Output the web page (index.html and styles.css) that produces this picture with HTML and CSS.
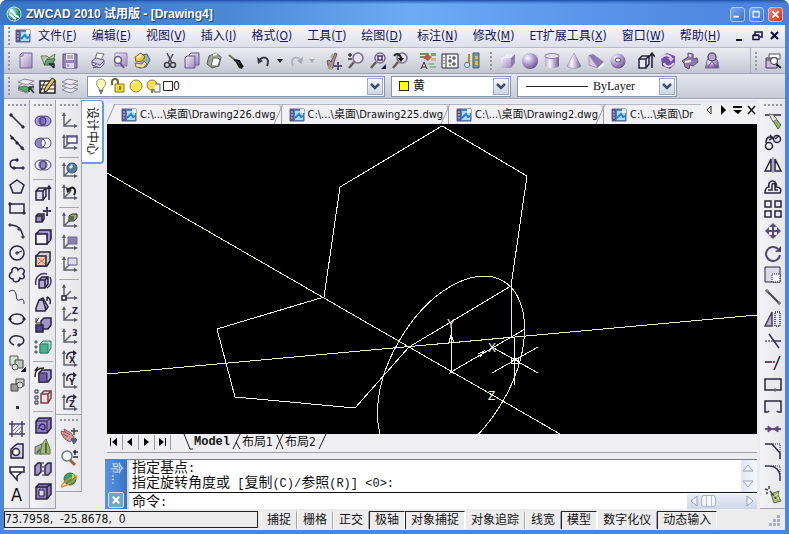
FILE: index.html
```html
<!DOCTYPE html>
<html lang="zh-CN">
<head>
<meta charset="utf-8">
<meta name="viewport" content="width=device-width, initial-scale=1">
<title>ZWCAD 2010 试用版 - [Drawing4]</title>
<link rel="stylesheet" href="styles.css">
</head>
<body>
<svg class="defs" width="0" height="0" aria-hidden="true">
  <defs>
    <linearGradient id="lilac" x1="0" y1="0" x2="1" y2="1"><stop offset="0" stop-color="#f6f2fb"/><stop offset="1" stop-color="#9b86bd"/></linearGradient>
    <linearGradient id="metal" x1="0" y1="0" x2="1" y2="0"><stop offset="0" stop-color="#b9aacd"/><stop offset=".35" stop-color="#f7f4fb"/><stop offset="1" stop-color="#6f5a92"/></linearGradient>
    <radialGradient id="ball" cx=".35" cy=".3" r=".75"><stop offset="0" stop-color="#fbf9ff"/><stop offset=".5" stop-color="#b3a0d3"/><stop offset="1" stop-color="#65508a"/></radialGradient>
    <radialGradient id="app" cx=".35" cy=".3" r=".8"><stop offset="0" stop-color="#c8f4e0"/><stop offset=".5" stop-color="#3a9c8a"/><stop offset="1" stop-color="#0c4a5c"/></radialGradient>
  </defs>
  <symbol id="doc" viewBox="0 0 16 16"><path d="M1 2h14v12H1z" fill="#4a86c4" stroke="#5a6488"/><path d="M1 2h4v12H1z" fill="#5b5688"/><path d="M6 4h8v9H6z" fill="#a8dcf8"/><path d="M11 2v4h4V2z" fill="#e6f3fc"/><path d="M6 11l4-4 2 3 2-1" stroke="#2f7fc0" stroke-width="2" fill="none"/><path d="M2 5h2M2 8h2M2 11h2" stroke="#c8c8ea"/></symbol>
  <symbol id="ucs" viewBox="0 0 18 18"><path d="M4 2v12h12M4 14l7-7" fill="none" stroke="#63636f" stroke-width="1.5"/><path d="M4 0L2 4h4zM18 14l-4-2v4z" fill="#56566a" stroke="none"/></symbol>
  <symbol id="turn" viewBox="0 0 18 18"><path d="M4 2v13h12" fill="none" stroke="#63636f" stroke-width="1.5"/><path d="M4 0L2 4h4zM18 15l-4-2v4z" fill="#56566a" stroke="none"/><path d="M7 9c-1-6 4-8 8-6" fill="none" stroke="#29243c" stroke-width="1.5"/><path d="M13 0l4 3-4 3z" fill="#29243c" stroke="none"/></symbol>
  <symbol id="lens" viewBox="0 0 18 18"><circle cx="11" cy="6" r="5" fill="#e9e4f2" stroke="#776b8c" stroke-width="1.5"/><path d="M7 10l-5 6" stroke="#6a5d56" stroke-width="2.5"/></symbol>
  <symbol id="layers" viewBox="0 0 18 18"><g fill="#eeeaf4" stroke="#8b869c"><path d="M1 13l6-3 10 2-7 4z"/><path d="M1 9l6-3 10 2-7 4z"/><path d="M1 5l6-3 10 2-7 4z"/></g></symbol>
  <symbol id="chev" viewBox="0 0 14 15"><path d="M3 5l4 4 4-4" fill="none" stroke="#40506c" stroke-width="2.5"/></symbol>
</svg>

<div class="window">
  <header class="titlebar">
    <svg class="logo" viewBox="0 0 16 16"><circle cx="8" cy="8" r="7" fill="url(#app)" stroke="#cfe6ee"/><path d="M4 4c5 0 3 7 9 7M3 8c3 1 3 4 7 5" fill="none" stroke="#e6fff4" stroke-width="2"/></svg>
    <h1>ZWCAD 2010 试用版 - [Drawing4]</h1>
    <div class="winbtns">
      <button aria-label="最小化"><svg viewBox="0 0 15 15"><path d="M3 10h6" stroke="#fff" stroke-width="2"/></svg></button>
      <button aria-label="最大化"><svg viewBox="0 0 15 15"><path d="M3.500 4.500h7v6h-7zM3 4h8" fill="none" stroke="#dcebff" stroke-width="1.500"/></svg></button>
      <button class="close" aria-label="关闭"><svg viewBox="0 0 15 15"><path d="M4 4l7 7M11 4l-7 7" stroke="#fff" stroke-width="2"/></svg></button>
    </div>
  </header>

  <nav class="menubar">
    <i class="grip"></i>
    <svg class="docicon"><use href="#doc"/></svg>
    <div class="menus">
      <button>文件(<u>F</u>)</button><button>编辑(<u>E</u>)</button><button>视图(<u>V</u>)</button><button>插入(<u>I</u>)</button><button>格式(<u>O</u>)</button><button>工具(<u>T</u>)</button><button>绘图(<u>D</u>)</button><button>标注(<u>N</u>)</button><button>修改(<u>M</u>)</button><button>ET扩展工具(<u>X</u>)</button><button>窗口(<u>W</u>)</button><button>帮助(<u>H</u>)</button>
    </div>
    <div class="mdi">
      <button aria-label="最小化文档"><svg viewBox="0 0 12 12"><path d="M3 10h6" stroke="#101040" stroke-width="2"/></svg></button>
      <button aria-label="还原文档"><svg viewBox="0 0 12 12"><path d="M4 5V2h7v5H9M2 5.500h6v4H2zM2 5h6M4 2h7" fill="none" stroke="#101040" stroke-width="1.500"/></svg></button>
      <button aria-label="关闭文档"><svg viewBox="0 0 12 12"><path d="M2 2l7 7M9 2L2 9" stroke="#101040" stroke-width="2.200"/></svg></button>
    </div>
  </nav>

  <div class="toolbar">
    <i class="grip"></i>
    <div class="set">
      <button aria-label="新建"><svg viewBox="0 0 18 18"><path d="M3 3l2-2h10v15H3z" fill="url(#lilac)" stroke="#75658f"/><path d="M3 4h3V1" fill="#fff" stroke="#75658f"/></svg></button>
      <button aria-label="打开"><svg viewBox="0 0 18 18"><path d="M2 4h6l2 2 6-4-2 10H5z" fill="#b7cdb0" stroke="#5f7c5c"/><path d="M5 13l3-6h8l-3 6z" fill="#6fa06a" stroke="#3c643c"/><path d="M10 12h5v4M15 16l-5-5" stroke="#223" stroke-width="1.500" fill="none"/></svg></button>
      <button aria-label="保存"><svg viewBox="0 0 18 18"><path d="M2 2h14v14H2z" fill="#9383b8" stroke="#5c4e7c"/><path d="M5 2h8v6H5z" fill="#f4f0fa"/><path d="M5 11h8v5H5z" fill="#ded6ea"/><path d="M6 4h6M6 6h6M7 12v3" stroke="#7a6b99"/></svg></button>
    </div>
    <div class="set">
      <button aria-label="打印"><svg viewBox="0 0 18 18"><path d="M6 7l2-6 7 1-3 6z" fill="#fff" stroke="#71688a"/><path d="M3 9l4-3 8 2v4l-4 4-8-3z" fill="#cfc8dc" stroke="#6a6280"/><path d="M3 10l8 3 4-4M7 12l-3 4 5-1" fill="none" stroke="#6a6280"/></svg></button>
      <button aria-label="打印预览"><svg viewBox="0 0 18 18"><path d="M4 1h12v13H4z" fill="url(#lilac)" stroke="#9184a8"/><circle cx="7" cy="8" r="3.500" fill="#f4f2f8" stroke="#675c7c" stroke-width="1.500"/><path d="M9 11l4 5" stroke="#675c7c" stroke-width="2"/></svg></button>
      <button aria-label="发布"><svg viewBox="0 0 18 18"><path d="M9 3l5-1 3 6-4 7-7 1" fill="#93b1c0" stroke="#476070"/><path d="M2 5l6-4 4 4-3 4-6 1z" fill="#f0c93c" stroke="#876420"/><path d="M4 6l4-3" stroke="#fff7c0" stroke-width="2"/><path d="M2 11l7 1 2-3 3 3-4 4-7-1z" fill="#e8dca0" stroke="#7c7040"/></svg></button>
    </div>
    <div class="set">
      <button aria-label="剪切"><svg viewBox="0 0 18 18" fill="none" stroke="#49434d" stroke-width="1.500"><path d="M6 1l5 10M12 2L7 11"/><circle cx="6" cy="13" r="2.500"/><circle cx="12" cy="13" r="2.500"/></svg></button>
      <button aria-label="复制"><svg viewBox="0 0 18 18" fill="url(#lilac)" stroke="#6a5b88"><path d="M6 3l2-2h8v12H6z"/><path d="M2 6l2-2h8v12H2z"/></svg></button>
      <button aria-label="粘贴"><svg viewBox="0 0 18 18"><path d="M4 4l7-3 5 4-2 9-7 2-5-4z" fill="#a3a59a" stroke="#5d6058"/><path d="M8 6h5l2 2-2 6H6z" fill="#fff" stroke="#62655e"/><path d="M8 3l4-1" stroke="#eee" stroke-width="2"/></svg></button>
      <button aria-label="特性匹配"><svg viewBox="0 0 18 18"><path d="M2 3l6 5" stroke="#64715a" stroke-width="2"/><path d="M7 7l9 7-1 3-3-1z" fill="#222"/><path d="M7 8l5 1 4 6" stroke="#111" stroke-width="2" fill="none"/></svg></button>
    </div>
    <div class="set">
      <button aria-label="放弃"><svg viewBox="0 0 18 18"><path d="M4 9c3-6 12-4 8 5" fill="none" stroke="#3c3b48" stroke-width="2"/><path d="M2 5l1 7 5-3z" fill="#3c3b48"/></svg></button><button class="caret" aria-label="放弃列表"><svg viewBox="0 0 8 8"><path d="M1 2h6L4 6z"/></svg></button>
      <button aria-label="重做"><svg viewBox="0 0 18 18"><path d="M14 9C11 3 2 5 6 14" fill="none" stroke="#b4b4bd" stroke-width="2"/><path d="M16 5l-1 7-5-3z" fill="#a8a8b2"/></svg></button><button class="caret off" aria-label="重做列表"><svg viewBox="0 0 8 8"><path d="M1 2h6L4 6z"/></svg></button>
    </div>
    <div class="set">
      <button aria-label="实时平移"><svg viewBox="0 0 18 18"><path d="M2 9l2-1 2 2 4-9 2 1-3 8-1 6-4 1z" fill="#a78f90" stroke="#6a5662"/><path d="M6 6l2-4M3 15l4 2" stroke="#a6b184" stroke-width="2"/><path d="M13 10v8M9 14h8M12 11h2M12 17h2M10 13v2M16 13v2" stroke="#47435f" stroke-width="1.500"/></svg></button>
      <button aria-label="实时缩放"><svg viewBox="0 0 18 18"><use href="#lens"/><path d="M1 3h4M3 1v4M1 7h4" stroke="#333" stroke-width="1.500"/></svg></button>
      <button aria-label="窗口缩放"><svg viewBox="0 0 18 18"><use href="#lens"/><path d="M9 4h4v4H9z" fill="#fff" stroke="#3b2a6c" stroke-width="1.500"/><path d="M17 12v5h-5z" fill="#1c1a40"/></svg></button>
      <button aria-label="缩放上一个"><svg viewBox="0 0 18 18"><use href="#lens"/><path d="M3 4c3-4 7-1 7 3" fill="none" stroke="#222" stroke-width="2"/><path d="M7 6h6l-3 4z"/></svg></button>
    </div>
    <div class="set">
      <button aria-label="特性"><svg viewBox="0 0 18 18"><path d="M1 2h9M1 5h6" stroke="#7b8a5a" stroke-width="2"/><path d="M8 2l5 3-4 4-5-3z" fill="#b45c4a"/><path d="M12 1h5v3h-5z" fill="#6fae6a"/><path d="M2 17l3-7 3 7M3 15h4" fill="none" stroke="#333"/><path d="M9 12h6M11 15h6" stroke="#56a15e"/><path d="M12 6h5v3h-5z" fill="#ccb78e"/></svg></button>
      <button aria-label="工具选项板"><svg viewBox="0 0 18 18"><path d="M1 2h16v14H1z" fill="#f3f3f7" stroke="#252338"/><path d="M5 2v14M12 5h2v2h-2zM8 8h2v2H8zM12 11h2v2h-2zM8 5h2M8 13h2M3 5v1M3 8v1M3 11v1" fill="none" stroke="#333"/></svg></button>
      <button aria-label="设计中心"><svg viewBox="0 0 18 18"><path d="M10 1h6v15h-6z" fill="#73959e" stroke="#4b626c"/><path d="M12 4h3v3h-3zM12 9h3v4h-3z" fill="#dfbc42"/><path d="M6 2v10M3 10l4 4" stroke="#b38c36" stroke-width="2"/><circle cx="4" cy="13" r="2.500" fill="#dce6ff" stroke="#547ba2"/></svg></button>
    </div>
    <i class="grip mid"></i>
    <div class="set">
      <button aria-label="长方体"><svg viewBox="0 0 18 18"><path d="M2 6l5-4h9v9l-4 5H2z" fill="#8f7cac"/><path d="M2 6l5-4h9l-4 4z" fill="#f0ecf6"/><path d="M2 6h10v10H2z" fill="url(#lilac)"/></svg></button>
      <button aria-label="球体"><svg viewBox="0 0 18 18"><circle cx="9" cy="9" r="8" fill="url(#ball)"/></svg></button>
      <button aria-label="圆柱体"><svg viewBox="0 0 18 18"><path d="M2 4v10c2 3 12 3 14 0V4z" fill="url(#metal)"/><ellipse cx="9" cy="4" rx="7" ry="2.500" fill="#e9e1f3" stroke="#8c7aa8"/></svg></button>
      <button aria-label="圆锥体"><svg viewBox="0 0 18 18"><path d="M9 1l7 13c-2 3-12 3-14 0z" fill="url(#metal)" stroke="#8a7ba5" stroke-width=".5"/></svg></button>
      <button aria-label="楔体"><svg viewBox="0 0 18 18"><path d="M2 3l4-1 11 8-6 6z" fill="#8c79b0"/><path d="M2 3l9 13-9-3z" fill="#d8cbe9" stroke="#7c6a9e" stroke-width=".5"/><path d="M11 16l6-6v3l-5 4z" fill="#fff"/></svg></button>
      <button aria-label="圆环体"><svg viewBox="0 0 18 18"><circle cx="9" cy="9" r="7.500" fill="url(#ball)"/><ellipse cx="9" cy="8" rx="3" ry="2" fill="#fff" stroke="#4b3b70"/></svg></button>
    </div>
    <div class="set">
      <button aria-label="拉伸"><svg viewBox="0 0 18 18"><path d="M2 7l3-3h7v8l-3 4H2zM2 7h7v9M9 7l3-3" fill="#e8e6f0" stroke="#28243c" stroke-width="1.500"/><path d="M15 16V2M12 5l3-4 3 4" fill="none" stroke="#1d1935" stroke-width="1.500"/></svg></button>
      <button aria-label="旋转"><svg viewBox="0 0 18 18"><path d="M2 5l6-4 8 3v8l-5 5-8-3z" fill="#7450a7"/><path d="M2 6c5-5 10-2 10 1M15 11c-4 5-9 4-10 0" fill="none" stroke="#e2d6f2" stroke-width="2"/><path d="M9 6h6l-3 4z" fill="#d3c2ea"/></svg></button>
      <button aria-label="扫掠"><svg viewBox="0 0 18 18"><path d="M7 1l5 1v5l4-1 1 4-5 4-3-1-1 4-4-2-1-4-2-2 6-4z" fill="#8e7ca5" stroke="#5e4e78"/><path d="M8 3l2 1M4 10l6-1" stroke="#f4effa" stroke-width="2"/></svg></button>
      <button aria-label="放样"><svg viewBox="0 0 18 18"><path d="M2 16c2-3 1-7 3-9h8c3 2 2 6 3 9z" fill="url(#ball)" stroke="#7b6a99"/><circle cx="9" cy="5" r="4" fill="#b5a7cb" stroke="#65547d" stroke-width="1.500"/><path d="M5 15l4-6 4 6" fill="none" stroke="#6c5b87"/></svg></button>
    </div>
    <div class="dock">
      <i class="grip"></i>
      <button aria-label="查找"><svg viewBox="0 0 18 18"><path d="M5 2h11v5H5z" fill="#fff" stroke="#56506a"/><path d="M2 6h11v10H2z" fill="#c8b9e0" stroke="#403758"/><path d="M2 8h11" stroke="#403758"/><circle cx="10" cy="9" r="3.500" fill="#fff" stroke="#333"/><path d="M12 12l5 4" stroke="#222" stroke-width="2"/></svg></button>
    </div>
  </div>

  <div class="toolbar props">
    <i class="grip"></i>
    <div class="set">
      <button aria-label="置为当前图层"><svg viewBox="0 0 18 18"><use href="#layers"/><path d="M1 11l6-2 8 2-6 4z" fill="#61aa65" stroke="#3b7841"/><path d="M12 10h5M12 10v5M12 10l5 6" stroke="#263c30" stroke-width="1.500"/></svg></button>
      <button aria-label="图层特性"><svg viewBox="0 0 18 18"><path d="M1 15V4h15v12H1z" fill="#fbf8ea" stroke="#222" stroke-width="1.500"/><path d="M1 8h15M1 12h15M6 4l-5 12" stroke="#222"/><path d="M13 1l3 2-8 11-3 1 1-4z" fill="#ecc25c" stroke="#222"/></svg></button>
      <button aria-label="上一图层"><svg viewBox="0 0 18 18"><use href="#layers"/></svg></button>
    </div>
    <label class="combo layer">
      <svg class="states" viewBox="0 0 80 18">
        <path d="M6 13v-2C2 8 3 2 8 2s6 6 2 9v2z" fill="#fffbb4" stroke="#9a9463"/><path d="M6 14h4M7 16h2" stroke="#4e5864" stroke-width="1.500"/>
        <path d="M19 8V5c0-4 6-4 6 0v4" fill="none" stroke="#6d6a35" stroke-width="2"/><path d="M22 7h9v8h-9z" fill="#f2dc3c" stroke="#827920"/><path d="M27 9v4" stroke="#665e10" stroke-width="1.500"/>
        <circle cx="43" cy="9" r="6" fill="#ffe64d" stroke="#88844b"/><path d="M40 6l2-1" stroke="#fff" stroke-width="2"/>
        <circle cx="59" cy="8" r="5" fill="#f4e14a" stroke="#86834a"/><path d="M62 7h5v8h-6v-3" fill="#eef1f4" stroke="#566"/><path d="M59 12v4" stroke="#8b8430" stroke-width="2"/>
        <path d="M70.500 4.500h9v9h-9z" fill="#fff" stroke="#222"/>
      </svg>
      <select aria-label="图层"><option>0</option></select><span class="drop"><svg><use href="#chev"/></svg></span>
    </label>
    <label class="combo colour">
      <span class="swatch"></span>
      <select aria-label="颜色"><option>黄</option></select><span class="drop"><svg><use href="#chev"/></svg></span>
    </label>
    <label class="combo ltype">
      <span class="rule"></span>
      <select aria-label="线型"><option>ByLayer</option></select><span class="drop"><svg><use href="#chev"/></svg></span>
    </label>
  </div>

  <main class="work">
    <div class="col">
      <div class="palette grow">
        <i class="grip"></i>
        <button aria-label="直线"><svg viewBox="0 0 18 18"><path d="M3 3l12 12" stroke-width="1.500"/><path d="M2 2h2v2H2zM14 14h2v2h-2z" fill="#222"/></svg></button>
        <button aria-label="构造线"><svg viewBox="0 0 18 18"><path d="M2 1l14 15" stroke-width="1.500"/><path d="M3 3h2v2H3zM8 8h2v2H8zM13 13h2v2h-2z" fill="#222"/></svg></button>
        <button aria-label="多段线"><svg viewBox="0 0 18 18"><path d="M9 4H6c-5 0-5 8 0 8h9" stroke-width="1.500"/><path d="M8 3h2v2H8zM14 11h2v2h-2zM5 11h2v2H5z" fill="#444"/></svg></button>
        <button aria-label="正多边形"><svg viewBox="0 0 18 18"><path d="M9 2l7 5-3 8H5L2 7z" fill="#e4e6e8" stroke-width="1.500"/></svg></button>
        <button aria-label="矩形"><svg viewBox="0 0 18 18"><path d="M2 4h14v9H2z" stroke-width="1.500"/><path d="M1 3h2v2H1zM15 12h2v2h-2z" fill="#333"/></svg></button>
        <button aria-label="圆弧"><svg viewBox="0 0 18 18"><path d="M2 3c7 0 12 4 13 12" stroke-width="1.500"/><path d="M1 2h2v2H1zM10 6h2v2h-2zM14 14h2v2h-2z" fill="#444" stroke="#444"/></svg></button>
        <button aria-label="圆"><svg viewBox="0 0 18 18"><circle cx="9" cy="9" r="7" stroke-width="1.500"/><path d="M9 9l5-2M8 8h2v2H8z"/></svg></button>
        <button aria-label="修订云线"><svg viewBox="0 0 18 18"><path d="M4 6c-1-5 5-6 6-2 3-4 9 0 5 4 3 3 0 6-3 4-1 5-7 5-7 1-4 0-5-5-1-7z" stroke-width="1.500"/></svg></button>
        <button aria-label="样条曲线"><svg viewBox="0 0 18 18"><path d="M1 4c3-3 6-2 7 2s0 7 4 6c3-2 4 0 4 4"/></svg></button>
        <button aria-label="椭圆"><svg viewBox="0 0 18 18"><ellipse cx="9" cy="9" rx="7" ry="5" stroke-width="1.500"/><path d="M1 8h2v2H1zM15 8h2v2h-2z" fill="#222"/></svg></button>
        <button aria-label="椭圆弧"><svg viewBox="0 0 18 18"><path d="M6 13c-9-4-2-10 4-9 8 1 7 8 1 9" stroke-width="1.500"/><path d="M10 12h2v2h-2z" fill="#777"/></svg></button>
        <button aria-label="插入块"><svg viewBox="0 0 18 18"><path d="M2 2h8v9H2z" fill="#d8e4d6" stroke="#555"/><path d="M7 6h8v8H7z" fill="#bdc9bd" stroke="#444"/><circle cx="7" cy="13" r="3" fill="#ddd" stroke="#555"/><path d="M18 13v5h-5z" fill="#111"/></svg></button>
        <button aria-label="创建块"><svg viewBox="0 0 18 18"><path d="M8 3h8v7H8z" fill="#ccc" stroke="#444"/><path d="M3 8h7v7H3z" fill="#999" stroke="#444"/><circle cx="12" cy="9" r="3" fill="#ddd" stroke="#555"/></svg></button>
        <button aria-label="点"><svg viewBox="0 0 18 18"><path d="M8 8h3v3H8z" fill="#333" stroke="none"/></svg></button>
        <button aria-label="图案填充"><svg viewBox="0 0 18 18"><path d="M4 1v16M14 1v16M1 4h16M1 14h16" stroke="#493e63" stroke-width="1.500"/><path d="M4 8l4-4M4 12l8-8M6 14l8-8M10 14l4-4" stroke="#777"/></svg></button>
        <button aria-label="面域"><svg viewBox="0 0 18 18"><path d="M3 7l6-5h6v14H3z" fill="#d6d0e4" stroke-width="1.500"/><circle cx="8" cy="10" r="3.500" fill="#fff" stroke-width="1.500"/></svg></button>
        <button aria-label="区域覆盖"><svg viewBox="0 0 18 18"><path d="M2 3h14v5H2zM2 8l7 8v-4l5-4" fill="#fff" stroke-width="1.500"/></svg></button>
        <button class="glyph" aria-label="多行文字">A</button>
      </div>
    </div>
    <div class="col">
      <div class="palette grow">
        <i class="grip"></i>
        <button aria-label="并集"><svg viewBox="0 0 18 18"><g fill="#a89ad2" stroke="#494077"><ellipse cx="7" cy="9" rx="6" ry="5"/><ellipse cx="11" cy="9" rx="6" ry="5"/></g><ellipse cx="9" cy="9" rx="3" ry="4" fill="#806fbc" stroke="#494077"/></svg></button>
        <button aria-label="差集"><svg viewBox="0 0 18 18"><ellipse cx="7" cy="9" rx="6" ry="5" fill="#9185c2" stroke="#494077"/><ellipse cx="12" cy="9" rx="5" ry="5" fill="#f8f8ff" stroke="#5c5580"/><path d="M9 5c3 2 3 6 0 8" stroke="#494077"/></svg></button>
        <button aria-label="交集"><svg viewBox="0 0 18 18"><g stroke="#494077"><ellipse cx="7" cy="9" rx="6" ry="5"/><ellipse cx="11" cy="9" rx="6" ry="5"/></g><ellipse cx="9" cy="9" rx="3" ry="4" fill="#8f80c5" stroke="#494077"/></svg></button>
        <hr>
        <button aria-label="拉伸面"><svg viewBox="0 0 18 18"><path d="M2 7l3-3h7v8l-3 4H2zM2 7h7v9M9 7l3-3" fill="#ded9ed" stroke-width="1.500"/><path d="M15 16V2M13 5l2-3 2 3" stroke-width="1.500"/></svg></button>
        <button aria-label="移动面"><svg viewBox="0 0 18 18"><path d="M2 10l2-2h6v5l-2 3H2zM2 10h6v6" fill="#9a8fbc" stroke-width="1.500"/><path d="M13 1v9M9 5h8M12 2h2M12 9h2M10 4v2M16 4v2" stroke-width="1.500"/></svg></button>
        <button aria-label="偏移面"><svg viewBox="0 0 18 18"><path d="M2 6l4-4h11v9l-4 5H2z" fill="#6c5aa4" stroke-width="1.500"/><path d="M2 6h11v10H2z" fill="#f4f1fb" stroke-width="1.500"/><path d="M5 4h10v9" stroke="#d8cff0"/></svg></button>
        <button aria-label="删除面"><svg viewBox="0 0 18 18"><path d="M2 6l4-4h10v9l-3 5H2z" fill="#d6cec9" stroke-width="1.500"/><path d="M2 6h10v10H2z" fill="#f0c6ad" stroke-width="1.500"/><path d="M4 8l7 6M11 8l-7 6" stroke="#a96c54"/></svg></button>
        <button aria-label="旋转面"><svg viewBox="0 0 18 18"><path d="M5 8l3-3h6v7l-3 4H5zM5 8h6v8M11 8l3-3" fill="#b5a8d8" stroke-width="1.500"/><path d="M2 13C0 5 7 0 13 2M16 5c2 5 0 9-3 11" stroke="#46386e" stroke-width="1.500"/></svg></button>
        <button aria-label="倾斜面"><svg viewBox="0 0 18 18"><path d="M2 14l3-8 4-2 5 9-3 4H2z" fill="#c4bbdd" stroke-width="1.500"/><path d="M5 6h4l3 10M16 10c1-4 0-6-3-7M13 3v4" stroke-width="1.500"/></svg></button>
        <button aria-label="复制面"><svg viewBox="0 0 18 18"><path d="M7 5l3-3h7v7l-3 4H7z" fill="#a093cb" stroke-width="1.500"/><path d="M2 9h7v7H2z" fill="#51438f" stroke-width="1.500"/><path d="M2 6l3-4M2 2v5h4" stroke="#222"/></svg></button>
        <button aria-label="着色面"><svg viewBox="0 0 18 18"><path d="M6 6l3-3h8v7l-3 5H6z" fill="#9bd6c0" stroke="#357c66"/><path d="M6 6h8v9H6z" fill="#4fae8b" stroke="#357c66"/><path d="M1 3h2v2H1zM1 8h2v2H1zM1 13h2v2H1z" fill="#4e7665" stroke="#4e7665"/></svg></button>
        <hr>
        <button aria-label="复制边"><svg viewBox="0 0 18 18"><path d="M5 7l3-3h9v8l-3 4H5z" fill="#a799d1" stroke-width="1.500"/><path d="M5 7h8v9H5z" fill="#6d5ca8"/><path d="M1 11c0-7 3-9 9-9M4 1L1 5" stroke="#222" stroke-width="1.500"/></svg></button>
        <button aria-label="着色边"><svg viewBox="0 0 18 18"><path d="M7 6l3-3h7v7l-3 5H7zM7 6h7v9M14 6l3-3" fill="#f3dede" stroke="#7c4048" stroke-width="1.500"/><path d="M1 2h3v3H1zM1 8h3v3H1zM1 13h3v3H1z"/></svg></button>
        <hr>
        <button aria-label="压印"><svg viewBox="0 0 18 18"><path d="M2 5l3-3h12v10l-4 5H2z" fill="#8f7ec6" stroke-width="1.500"/><path d="M2 5h11v12M13 5l4-3"/><path d="M5 13c0-6 6-6 6-2s-4 3-4 1" stroke="#3d2c78" stroke-width="1.500"/></svg></button>
        <button aria-label="清除"><svg viewBox="0 0 18 18"><path d="M1 9l7-3v10H1z" fill="#a8adaa" stroke="#626864"/><path d="M8 6l4-5 4 10v5H6z" fill="#a0b578" stroke="#587142"/><path d="M12 5v10M6 11l-3 4" stroke="#566b3d" stroke-width="2"/></svg></button>
        <button aria-label="分割"><svg viewBox="0 0 18 18"><path d="M1 6l3-3h3v9l-3 3H1zM11 6l3-3h3v9l-3 3h-3z" fill="#a496cb" stroke-width="1.500"/><path d="M9 2v2M9 6v2M9 10v2M9 14v2"/></svg></button>
        <button aria-label="抽壳"><svg viewBox="0 0 18 18"><path d="M2 5l3-3h12v10l-4 5H2zM2 5h11v12M13 5l4-3" fill="#8d7db9" stroke-width="1.500"/><path d="M5 8h5v6H5z" fill="#ddd9ec"/></svg></button>
      </div>
    </div>
    <div class="col">
      <div class="palette">
        <i class="grip"></i>
        <button aria-label="UCS"><svg viewBox="0 0 18 18"><use href="#ucs"/></svg></button>
        <button aria-label="命名UCS"><svg viewBox="0 0 18 18"><use href="#ucs"/><path d="M7 2h10v7H7z" fill="#fafaff" stroke="#504776" stroke-width="1.500"/><path d="M7 3h10" stroke="#504776"/></svg></button>
        <hr>
        <button aria-label="世界UCS"><svg viewBox="0 0 18 18"><use href="#ucs"/><circle cx="12" cy="6" r="5" fill="#55799c" stroke="#3d536b"/><path d="M9 5l3-3 1 3-3 2zM13 9l2-2" fill="#dbeaf0" stroke="none"/></svg></button>
        <button aria-label="上一个UCS"><svg viewBox="0 0 18 18"><use href="#ucs"/><path d="M8 6c5-5 9-1 6 5" stroke="#222" stroke-width="2"/><path d="M6 3l1 6 5-3z" fill="#222" stroke="none"/></svg></button>
        <hr>
        <button aria-label="对象UCS"><svg viewBox="0 0 18 18"><use href="#ucs"/><path d="M9 4l3-2h5v4l-3 3H9z" fill="#9fac84" stroke="#222"/><path d="M9 4h5v5H9z" fill="#5e6b4a" stroke="none"/></svg></button>
        <button aria-label="面UCS"><svg viewBox="0 0 18 18"><use href="#ucs"/><path d="M8 3h9v7H8z" fill="#8b82ac" stroke="#6e6690"/></svg></button>
        <button aria-label="视图UCS"><svg viewBox="0 0 18 18"><use href="#ucs"/><path d="M8 2h9v7H8z" fill="#dedbe8" stroke="#665e85"/></svg></button>
        <hr>
        <button aria-label="原点UCS"><svg viewBox="0 0 18 18"><use href="#ucs"/><path d="M2 12h4v4H2z" fill="#fff" stroke-width="1.500"/></svg></button>
        <button aria-label="Z轴矢量UCS"><svg viewBox="0 0 18 18"><use href="#ucs"/><text x="12" y="8">Z</text></svg></button>
        <button aria-label="三点UCS"><svg viewBox="0 0 18 18"><use href="#ucs"/><text x="12" y="8">3</text></svg></button>
        <button aria-label="X轴旋转UCS"><svg viewBox="0 0 18 18"><use href="#turn"/><text x="9" y="13">X</text></svg></button>
        <button aria-label="Y轴旋转UCS"><svg viewBox="0 0 18 18"><use href="#turn"/><text x="9" y="13">Y</text></svg></button>
        <button aria-label="Z轴旋转UCS"><svg viewBox="0 0 18 18"><use href="#turn"/><text x="9" y="13">Z</text></svg></button>
      </div>
      <div class="palette">
        <i class="grip"></i>
        <button aria-label="平移"><svg viewBox="0 0 18 18"><path d="M1 4l4 1-1-3 7 4 3 5-4 4-5-3-3-4z" fill="#d59a9a" stroke="#8e5560"/><path d="M5 5l5 3M3 7l5 3" stroke="#8e5560"/><path d="M11 12l3 5 3-4-2-2z" fill="#46628e" stroke="#46628e"/><path d="M14 1v7M11 4h7" stroke="#314e41" stroke-width="1.500"/></svg></button>
        <button aria-label="缩放"><svg viewBox="0 0 18 18"><circle cx="7" cy="7" r="5" fill="#f5fafd" stroke="#6c7b86" stroke-width="1.500"/><path d="M10 11l5 5" stroke="#9b6439" stroke-width="3"/><path d="M13 3h5M15 1v5M13 8h5" stroke-width="1.500"/></svg></button>
        <button aria-label="三维动态观察"><svg viewBox="0 0 18 18"><circle cx="10" cy="8" r="6" fill="#38a05d" stroke="#267446"/><path d="M2 16c-3-2 9-10 14-11 3 1-7 9-14 11z" stroke="#e68a33" stroke-width="1.500"/><path d="M12 3c3 0 3 4 0 5" fill="#b8ea58" stroke="none"/></svg></button>
      </div>
    </div>
    <div class="col side">
      <button class="sidetab">设计中心</button>
    </div>

    <section class="centre">
      <div class="filetabs">
        <div class="strip">
          <button class="ftab"><svg><use href="#doc"/></svg>C:\...\桌面\Drawing226.dwg</button>
          <button class="ftab"><svg><use href="#doc"/></svg>C:\...\桌面\Drawing225.dwg</button>
          <button class="ftab"><svg><use href="#doc"/></svg>C:\...\桌面\Drawing2.dwg</button>
          <button class="ftab last"><svg><use href="#doc"/></svg>C:\...\桌面\Dr</button>
        </div>
        <div class="ctl">
          <button aria-label="向左"><svg viewBox="0 0 12 12"><path d="M8 2L4 6l4 4z" fill="none" stroke="#222"/></svg></button>
          <button aria-label="向右"><svg viewBox="0 0 12 12"><path d="M4 1l5 5-5 5z"/></svg></button>
          <button aria-label="列表"><svg viewBox="0 0 12 12"><path d="M2 2h9v2H2zM2 6h9l-4 4z"/></svg></button>
          <button aria-label="关闭"><svg viewBox="0 0 12 12"><path d="M3 2l7 8M10 2l-7 8" stroke="#111" stroke-width="1.500"/></svg></button>
        </div>
      </div>

      <div class="canvas">
        <svg viewBox="107 124 650 310" preserveAspectRatio="xMinYMin slice">
          <g fill="none" stroke="#f4f4ee" shape-rendering="crispEdges">
            <path d="M324 297L340 187L442 126L527 176L511 286L409 347L355 408L235 397L217 329Z"/>
            <path stroke="#eeeeb4" d="M107 173L560 434M107 374L757 315M511 286V337"/>
            <ellipse stroke="#eeeeb4" cx="451" cy="371" rx="104" ry="60" transform="rotate(-60 451 371)"/>
            <path d="M451 327V372L525 329M449 342l2-7 3 7M478 354l6-3-4 6M449 370l5 4M449 374l5-4"/>
            <path d="M492 373L538 347M492 347L538 373M514 337V385M511 358h7v5h-7zM511 360h7"/>
          </g>
          <g class="axes"><text x="447" y="328">Y</text><text x="488" y="352">X</text><text x="488" y="400">Z</text></g>
        </svg>
      </div>

      <div class="layouts">
        <div class="navs">
          <button aria-label="第一个"><svg viewBox="0 0 12 12"><path d="M2 2h1v8H2zM9 2v8L4 6z"/></svg></button><button aria-label="上一个"><svg viewBox="0 0 12 12"><path d="M8 2v8L3 6z"/></svg></button><button aria-label="下一个"><svg viewBox="0 0 12 12"><path d="M4 2v8l5-4z"/></svg></button><button aria-label="最后一个"><svg viewBox="0 0 12 12"><path d="M3 2v8l5-4zM9 2h1v8H9z"/></svg></button>
        </div>
        <svg class="slash" viewBox="0 0 10 16"><path d="M1 0l6 15h3"/></svg>
        <button class="on">Model</button>
        <svg class="slash" viewBox="0 0 10 16"><path d="M9 0L2 15M5 8l4 7"/></svg>
        <button>布局1</button>
        <svg class="slash" viewBox="0 0 10 16"><path d="M9 0L2 15M3 1l6 14"/></svg>
        <button>布局2</button>
        <svg class="slash" viewBox="0 0 10 16"><path d="M9 0L2 15"/></svg>
      </div>

      <div class="command">
        <div class="cmdbar"><span>命…</span><button aria-label="关闭命令行"><svg viewBox="0 0 15 15"><path d="M4 4l7 7M11 4l-7 7" stroke="#fff" stroke-width="2"/></svg></button></div>
        <div class="cmdbody">
          <div class="history">
            <div class="lines">
              <p>指定基点<span>:</span></p>
              <p>指定旋转角度或<span> [</span>复制<span>(C)/</span>参照<span>(R)] &lt;0&gt;:</span></p>
            </div>
            <div class="vbar"><svg viewBox="0 0 14 14"><path d="M7 4l5 6H2z"/></svg><svg viewBox="0 0 14 14"><path d="M7 10l5-6H2z"/></svg></div>
          </div>
          <div class="prompt">
            <label for="cmd">命令<span>:</span></label><input id="cmd" type="text">
            <div class="hbar"><svg viewBox="0 0 14 14"><path d="M4 7l6-5v10z"/></svg><i></i><svg class="end" viewBox="0 0 14 14"><path d="M10 7L4 2v10z"/></svg></div>
          </div>
        </div>
      </div>
    </section>

    <div class="col right">
      <div class="palette grow">
        <i class="grip"></i>
        <button aria-label="删除"><svg viewBox="0 0 18 18"><path d="M1 3h16" stroke-width="1.500"/><path d="M5 2l4 1 8 10-3 4z" fill="#90b36d" stroke="#4b643a"/><path d="M5 2l4 8 4-3-4-4z" fill="#ece9d8" stroke="#777"/></svg></button>
        <button aria-label="复制对象"><svg viewBox="0 0 18 18"><circle cx="5" cy="12" r="3.500" stroke-width="1.500"/><circle cx="13" cy="5" r="3.500" stroke-width="1.500"/><path d="M2 9c0-6 3-7 7-5M6 1l3 3-4 2M11 5l4-3" stroke-width="1.500"/></svg></button>
        <button aria-label="镜像"><svg viewBox="0 0 18 18"><path d="M1 15L7 3v12zM11 3l6 12h-6z" stroke-width="1.500"/><path d="M9 1v16" stroke="#77618e"/></svg></button>
        <button aria-label="偏移"><svg viewBox="0 0 18 18"><path d="M1 15h15c2-4 0-6-4-6 2-8-9-8-7 0-3 0-4 2-4 6zM4 12h4V7c0-2 3-2 3 0v5h3" stroke-width="1.500"/></svg></button>
        <button aria-label="阵列"><svg viewBox="0 0 18 18"><path d="M1 1h6v6H1zM11 1h6v6h-6zM1 11h6v6H1zM11 11h6v6h-6z" stroke-width="1.500"/></svg></button>
        <button aria-label="移动"><svg viewBox="0 0 18 18"><path d="M9 3v12M3 9h12" stroke="#5b4a7f" stroke-width="2"/><path d="M9 1L5 5h8zM9 17l-4-4h8zM1 9l4-4v8zM17 9l-4-4v8z" fill="#5b4a7f" stroke="none"/></svg></button>
        <button aria-label="旋转对象"><svg viewBox="0 0 18 18"><path d="M14 5A7 7 0 1 0 16 11" stroke="#51466a" stroke-width="2"/><path d="M17 2v6h-6z" fill="#51466a" stroke="none"/></svg></button>
        <button aria-label="比例"><svg viewBox="0 0 18 18"><path d="M1 1h15v15H1z" fill="#dedae9"/><path d="M8 16V8h8v8z" fill="#f6f4fa" stroke="#222" stroke-dasharray="1 1"/></svg></button>
        <button aria-label="拉长"><svg viewBox="0 0 18 18"><path d="M2 2l14 14" stroke="#444" stroke-width="2"/><path d="M2 2h2v2H2zM14 14h2v2h-2z" fill="#777" stroke="#777"/></svg></button>
        <button aria-label="拉伸对象"><svg viewBox="0 0 18 18"><path d="M1 16L8 2v14z" fill="#bdb3ce" stroke="#453c5e" stroke-width="1.500"/><path d="M11 2h5v14h-5z" stroke-dasharray="1 1" stroke-width="1.500"/></svg></button>
        <button aria-label="修剪"><svg viewBox="0 0 18 18"><path d="M1 9h8" stroke-dasharray="2 1"/><path d="M9 9h8M5 2l10 14" stroke="#383050" stroke-width="1.500"/></svg></button>
        <button aria-label="延伸"><svg viewBox="0 0 18 18"><path d="M1 8h5" stroke-width="1.500"/><path d="M6 8h6" stroke="#ae334f" stroke-width="2" stroke-dasharray="2 1"/><path d="M16 2l-6 14" stroke-width="1.500"/></svg></button>
        <button aria-label="打断于点"><svg viewBox="0 0 18 18"><path d="M1 3h16v11H1z" fill="#ece6ee" stroke-width="1.500"/><path d="M10 13h2v2h-2z" fill="#666" stroke="#666"/></svg></button>
        <button aria-label="打断"><svg viewBox="0 0 18 18"><path d="M4 14H1V3h16v11h-3" fill="#ece6ee" stroke-width="1.500"/><path d="M4 13h1v1H4zM13 13h1v1h-1z" fill="#555" stroke="#555"/></svg></button>
        <button aria-label="合并"><svg viewBox="0 0 18 18"><path d="M1 9h16" stroke-width="1.500"/><path d="M4 6l4 3-4 3zM14 6l-4 3 4 3z" fill="#624580" stroke="#624580"/></svg></button>
        <button aria-label="倒角"><svg viewBox="0 0 18 18"><path d="M1 2h7l8 9v6" stroke-width="1.500"/><path d="M9 2h7v8" stroke-dasharray="1 1"/></svg></button>
        <button aria-label="圆角"><svg viewBox="0 0 18 18"><path d="M1 2h4c7 0 11 5 11 10v5" stroke="#393150" stroke-width="1.500"/><path d="M7 2h9v8" stroke-dasharray="1 1"/></svg></button>
        <button aria-label="分解"><svg viewBox="0 0 18 18"><path d="M7 8l8-3-1 4 3 6-7 2z" fill="#aeb97c" stroke="#5c7043"/><path d="M1 3l3 1M5 0v3M2 7h2M6 5l7 9" stroke="#4a493f" stroke-width="1.500"/><path d="M9 11l5-3M11 14l4-2" stroke="#e6eaaf"/></svg></button>
      </div>
    </div>
  </main>

  <footer class="status">
    <output class="coords">73.7958,&nbsp; -25.8678,&nbsp; 0</output>
    <div class="modes">
      <button>捕捉</button><button>栅格</button><button>正交</button><button class="down">极轴</button><button class="down">对象捕捉</button><button>对象追踪</button><button>线宽</button><button class="down">模型</button><button>数字化仪</button><button class="down">动态输入</button>
    </div>
    <svg class="sizer" viewBox="0 0 12 12"><path d="M8 0h3v3H8zM4 4h3v3H4zM8 4h3v3H8zM0 8h3v3H0zM4 8h3v3H4zM8 8h3v3H8z"/></svg>
  </footer>
</div>
</body>
</html>
```
FILE: styles.css
```css
* { box-sizing: border-box; }

body {
  margin: 0;
  font: 12px/16px "DejaVu Sans Condensed", "Noto Sans CJK SC", sans-serif;
  color: #111;
}

button {
  margin: 0;
  padding: 0;
  border: 0;
  background: none;
  font: inherit;
  color: inherit;
}

svg { display: block; flex: none; }
.defs { position: absolute; }

.window {
  display: flex;
  flex-direction: column;
  height: 100vh;
  padding: 0 4px 4px;
  border-radius: 7px 7px 0 0;
  background: #4c86d8;
  overflow: hidden;
}

/* title bar */
.titlebar {
  display: flex;
  flex: none;
  align-items: center;
  gap: 4px;
  height: 25px;
  margin: 0 -4px;
  padding: 3px 6px 0;
  background: linear-gradient(#1e4a9c 0, #2f68c4 1px, transparent 4px), linear-gradient(90deg, #3a76c2, #4c8ad6 30%, #6cacf4 52%, #5b94e8 75%, #4a80dc);
}
.logo { width: 16px; height: 16px; }
.titlebar h1 {
  flex: 1;
  margin: 0;
  font: bold 12px/20px "Liberation Sans", "Noto Sans CJK SC", sans-serif;
  color: #fff;
  text-shadow: 1px 1px 1px #173768;
}
.winbtns { display: flex; gap: 4px; }
.winbtns button {
  width: 15px;
  height: 15px;
  border: 1px solid #a5cbf5;
  border-radius: 3px;
  background: linear-gradient(135deg, #79adf0, #3a74cc);
}
.winbtns svg { width: 13px; height: 13px; }
.winbtns .close { border-color: #f1b5a8; background: linear-gradient(135deg, #ec8a78, #c43428); }

/* dotted drag handles */
.grip {
  flex: none;
  width: 2px;
  height: 18px;
  margin: 0 5px 0 4px;
  background: repeating-linear-gradient(#9496a6 0 2px, transparent 2px 4px);
}

/* menu bar */
.menubar {
  display: flex;
  flex: none;
  align-items: center;
  height: 23px;
  background: linear-gradient(#f7f7fb, #dddfea);
  border-bottom: 1px solid #b9bccb;
}
.docicon { width: 16px; height: 16px; }
.menus { display: flex; flex: 1; gap: 15px; padding-left: 7px; white-space: nowrap; }
.menus button { color: #14145a; }
.mdi { display: flex; gap: 6px; padding-right: 4px; }
.mdi svg { width: 12px; height: 12px; }

/* horizontal toolbars */
.toolbar {
  display: flex;
  flex: none;
  align-items: center;
  height: 26px;
  background: linear-gradient(#ececf2, #c4c7d3);
  border-bottom: 1px solid #9ea1b0;
}
.set { display: flex; margin-right: 6px; }
.set button, .dock button, .palette button {
  display: flex;
  align-items: center;
  justify-content: center;
  flex: none;
  width: 22px;
  height: 22px;
}
.set svg, .dock svg, .palette svg { width: 18px; height: 18px; }
.set .caret { width: 10px; }
.caret svg { width: 8px; height: 8px; fill: #222; }
.caret.off svg { fill: #aaabb5; }
.grip.mid { margin: 0 5px 0 1px; }
.dock {
  display: flex;
  align-items: center;
  align-self: stretch;
  margin-left: auto;
  width: 35px;
  border-left: 1px solid #a7aab8;
}

.props { height: 25px; background: linear-gradient(#e4e5ed, #c8cbd6); }

.combo {
  position: relative;
  display: flex;
  align-items: center;
  height: 21px;
  margin-right: 6px;
  border: 1px solid #8793a8;
  background: #fff;
}
.combo select {
  appearance: none;
  width: 100%;
  height: 19px;
  margin: 0;
  padding: 0 20px 0 0;
  border: 0;
  background: none;
  color: #111;
  font: inherit;
}
.combo .drop {
  position: absolute;
  top: 1px;
  right: 1px;
  width: 16px;
  height: 17px;
  border: 1px solid #9ba9c2;
  background: linear-gradient(#f6f8fc, #ccd5e6);
  pointer-events: none;
}
.drop svg { width: 14px; height: 15px; }
.layer { width: 298px; padding-left: 5px; }
.states { width: 80px; height: 18px; }
.colour { width: 120px; padding-left: 7px; gap: 4px; }
.swatch { flex: none; width: 10px; height: 10px; border: 1px solid #222; background: #ff0; }
.ltype { width: 160px; padding-left: 8px; gap: 5px; }
.rule { flex: none; width: 62px; height: 1px; background: #222; }
.combo.ltype select { font-family: "Liberation Serif", serif; }

/* work area */
.work {
  display: flex;
  flex: 1;
  min-height: 0;
  background: #ececf0;
  border-top: 1px solid #f6f6fa;
}
.col { display: flex; flex: none; flex-direction: column; width: 26px; }
.palette {
  display: flex;
  flex-direction: column;
  align-items: center;
  padding: 4px 0 0;
  border-right: 1px solid #a0a2ae;
  border-bottom: 1px solid #a0a2ae;
  background: linear-gradient(90deg, #f3f3f6, #e6e6eb);
}
.grow { flex: 1; min-height: 0; }
.palette .grip {
  width: 18px;
  height: 2px;
  margin: 0 0 4px;
  background: repeating-linear-gradient(90deg, #9496a6 0 2px, transparent 2px 4px);
}
.palette hr {
  flex: none;
  width: 20px;
  height: 1px;
  margin: 3px 0 2px;
  border: 0;
  background: #a6a8b5;
}
.palette button > svg { fill: none; stroke: #29243c; }
.palette text { fill: #29243c; stroke: none; font: bold 9px "DejaVu Sans Condensed", sans-serif; }
.palette .glyph { font-size: 18px; }
.side { width: 25px; }
.sidetab {
  width: 22px;
  height: 64px;
  border: 1px solid #6f9bd0;
  border-width: 1px 2px 2px 0;
  border-radius: 0 4px 4px 0;
  background: #fdfdff;
  writing-mode: vertical-rl;
  text-orientation: sideways;
  line-height: 20px;
}
.right { width: 25px; }
.right .palette { border-right: 0; }

.centre {
  display: flex;
  flex: 1;
  flex-direction: column;
  min-width: 0;
  margin-right: 3px;
}

/* document tabs */
.filetabs { display: flex; flex: none; height: 24px; background: linear-gradient(#dfe3ee, #f1f1f4 5px); }
.strip { display: flex; flex: 1; min-width: 0; padding: 4px 0 0 7px; overflow: hidden; }
.ftab {
  position: relative;
  display: flex;
  flex: none;
  align-items: center;
  gap: 3px;
  padding: 0 6px 0 7px;
  height: 20px;
  border-top: 1px solid #b6b7bf;
  font-size: 11px;
  white-space: nowrap;
}
.ftab svg { width: 16px; height: 16px; }
.ftab::before, .ftab::after {
  content: "";
  position: absolute;
  top: -1px;
  height: 20px;
  width: 6px;
}
.ftab::before { left: -4px; border-left: 1px solid #9a9ba5; transform: skewX(-24deg); }
.ftab::after { right: 0; border-right: 1px solid #9a9ba5; border-radius: 0 6px 0 0; }
.ftab.last { flex: 1; padding-right: 0; }
.ftab.last::after { content: none; }
.ctl { display: flex; align-items: center; gap: 2px; padding: 0 0 4px 2px; }
.ctl svg { width: 12px; height: 12px; }

/* drawing */
.canvas { flex: 1; min-height: 0; background: #000; overflow: hidden; }
.canvas svg { width: 100%; height: 100%; }
.axes { fill: #f4f4ee; font: 12px "Liberation Sans", sans-serif; }

/* layout tabs */
.layouts {
  display: flex;
  flex: none;
  align-items: center;
  height: 19px;
  margin-bottom: 6px;
  padding-bottom: 2px;
  border-bottom: 1px solid #9c9da6;
  background: #efeff1;
}
.navs { display: flex; margin-right: 12px; }
.navs button { width: 16px; height: 15px; border-right: 1px solid #9a9aa4; }
.navs svg { width: 14px; height: 12px; }
.slash { width: 10px; height: 16px; fill: none; stroke: #222; }
.layouts > button { height: 16px; margin: 0 1px; }
.layouts .on { font: bold 12px/16px "Liberation Mono", monospace; }

/* command window */
.command {
  display: flex;
  flex: none;
  height: 50px;
  margin-left: -2px;
  border-top: 1px solid #77797f;
  font-size: 14px;
  line-height: 16px;
}
.cmdbar {
  display: flex;
  flex: none;
  flex-direction: column;
  align-items: center;
  justify-content: space-between;
  width: 22px;
  padding: 2px 0 1px;
  background: linear-gradient(90deg, #5b93de, #3873c8);
  color: #dceaff;
}
.cmdbar span { writing-mode: vertical-rl; text-orientation: sideways; font-size: 12px; line-height: 16px; }
.cmdbar button { width: 16px; height: 16px; border: 1px solid #cfe2f8; border-radius: 2px; background: #6ea5c9; }
.cmdbar svg { width: 14px; height: 14px; }
.cmdbody { display: flex; flex: 1; flex-direction: column; min-width: 0; border-left: 2px solid #d6d7dc; background: #fff; }
.cmdbody span { font: 12px/12px "Liberation Mono", monospace; white-space: pre; }
.history { display: flex; flex: 1; min-height: 0; border-bottom: 1px solid #111; }
.lines { flex: 1; padding: 0 3px; }
.lines p { margin: 0; line-height: 15px; }
.vbar { display: flex; flex-direction: column; justify-content: space-around; width: 16px; background: linear-gradient(90deg, #dfe6f2, #f6f8fc); }
.command .vbar svg, .command .hbar svg { width: 14px; height: 14px; fill: #f4f8fe; stroke: #8e9fb8; }
.prompt { display: flex; flex: none; align-items: center; height: 16px; padding-left: 3px; }
.prompt input { flex: 1; min-width: 0; height: 14px; padding: 0; border: 0; outline: 0; background: none; font: inherit; }
.hbar { display: flex; align-items: center; width: 70px; height: 15px; background: linear-gradient(#e9eef6, #cdd7e7); }
.hbar i { width: 15px; height: 12px; border: 1px solid #a9b4c8; border-radius: 3px; background: repeating-linear-gradient(90deg, #f5f7fb 0 4px, #b5c0d2 4px 5px); }
.hbar .end { margin-left: auto; }

/* status bar */
.status {
  display: flex;
  flex: none;
  align-items: center;
  height: 21px;
  background: #ececec;
}
.coords {
  flex: none;
  width: 254px;
  height: 17px;
  border: 1px solid #222;
  line-height: 15px;
}
.modes { display: flex; flex: 1; margin-left: 3px; }
.modes button {
  height: 18px;
  padding: 0 5px;
  border-top: 1px solid transparent;
  border-left: 1px solid #fff;
  border-right: 1px solid #a4a4a8;
  white-space: nowrap;
}
.modes .down { border-top-color: #222; border-left-color: #222; border-right-color: #fff; }
.sizer { width: 12px; height: 12px; margin: 2px 4px 0 0; fill: #a9b1c6; }
```
